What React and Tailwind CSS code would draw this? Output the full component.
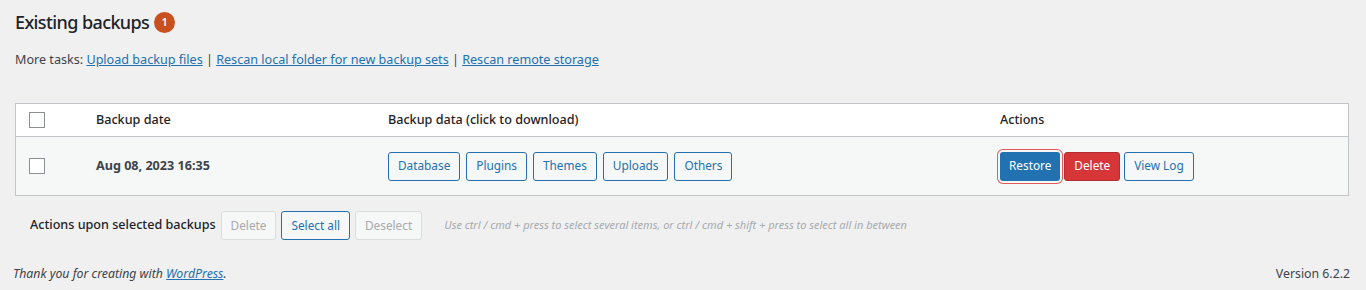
const font = { fontFamily: '"Segoe UI", "Noto Sans", "Open Sans", sans-serif' };

function Box() {
  return <span className="block h-4 w-4 border border-[#8c8f94] bg-white" />;
}

function OutlineButton({ children, disabled = false }) {
  return (
    <button
      className={`h-[29px] rounded-[3px] border px-[9px] text-[11.8px] leading-none ${
        disabled
          ? "border-[#dcdcde] bg-[#f6f7f7] text-[#a7aaad]"
          : "border-[#2271b1] bg-[#f6f7f7] text-[#2271b1]"
      }`}
    >
      {children}
    </button>
  );
}

export default function App() {
  return (
    <main className="h-[290px] w-[1366px] bg-[#f0f0f1] text-[#3c434a]" style={font}>
      <div className="px-[15px] pt-[10px]">
        <div className="flex h-[24px] items-center gap-[5px]">
          <h2 className="text-[18px] font-medium leading-none tracking-[-0.6px] text-[#1d2327]">Existing backups</h2>
          <span className="flex h-[21px] w-[21px] items-center justify-center rounded-full bg-[#c9501f] text-[11px] font-semibold text-white">
            1
          </span>
        </div>

        <p className="mt-[16px] text-[12.6px] leading-[20px]">
          More tasks: <a className="text-[#2271b1] underline">Upload backup files</a> |{" "}
          <a className="text-[#2271b1] underline">Rescan local folder for new backup sets</a> |{" "}
          <a className="text-[#2271b1] underline">Rescan remote storage</a>
        </p>

        <div className="mt-[33px] mr-[2px] border border-[#c3c4c7] text-[12.6px]">
          <div className="grid h-[33px] grid-cols-[80px_292px_612px_1fr] items-center border-b border-[#c3c4c7] bg-white font-medium text-[#1d2327]">
            <div className="pl-[13px]"><Box /></div>
            <div>Backup date</div>
            <div>Backup data (click to download)</div>
            <div>Actions</div>
          </div>
          <div className="grid h-[58px] grid-cols-[80px_292px_612px_1fr] items-center bg-[#f6f7f7]">
            <div className="pl-[13px]"><Box /></div>
            <div className="font-bold">Aug 08, 2023 16:35</div>
            <div className="flex gap-[6px]">
              <OutlineButton>Database</OutlineButton>
              <OutlineButton>Plugins</OutlineButton>
              <OutlineButton>Themes</OutlineButton>
              <OutlineButton>Uploads</OutlineButton>
              <OutlineButton>Others</OutlineButton>
            </div>
            <div className="flex items-center gap-[4px]">
              <button className="h-[29px] rounded-[3px] bg-[#2271b1] px-[9px] text-[11.8px] leading-none text-white shadow-[0_0_0_2px_#f6f7f7,0_0_0_3px_#e25c5c]">
                Restore
              </button>
              <button className="h-[29px] rounded-[3px] border border-[#b32d2e] bg-[#d63638] px-[9px] text-[11.8px] leading-none text-white">
                Delete
              </button>
              <OutlineButton>View Log</OutlineButton>
            </div>
          </div>
        </div>

        <div className="mt-[15px] flex items-center pl-[15px]">
          <span className="mr-[5px] text-[12.6px] font-medium text-[#1d2327]">Actions upon selected backups</span>
          <div className="flex gap-[5px]">
            <OutlineButton disabled>Delete</OutlineButton>
            <OutlineButton>Select all</OutlineButton>
            <OutlineButton disabled>Deselect</OutlineButton>
          </div>
          <span className="ml-[22px] text-[11px] italic text-[#a7aaad]">
            Use ctrl / cmd + press to select several items, or ctrl / cmd + shift + press to select all in between
          </span>
        </div>
      </div>

      <div className="mt-[25px] flex justify-between pl-[13px] pr-[16px] text-[12.3px]">
        <span className="italic">
          Thank you for creating with <a className="text-[#2271b1] underline">WordPress</a>.
        </span>
        <span>Version 6.2.2</span>
      </div>
    </main>
  );
}
